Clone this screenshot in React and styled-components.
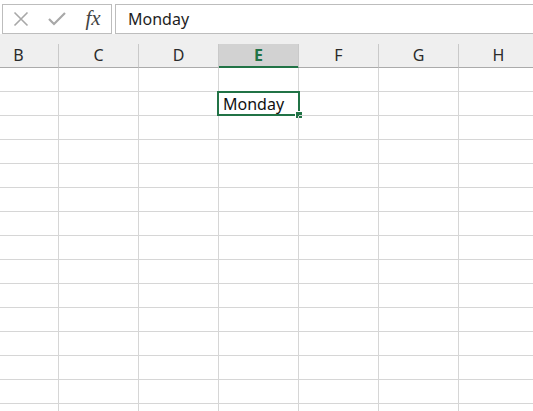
import React from "react";
import styled, { createGlobalStyle } from "styled-components";

const GREEN = "#217346";
const FONT = `"Noto Sans", "Open Sans", "Liberation Sans", sans-serif`;

const Global = createGlobalStyle`
  html, body { margin: 0; padding: 0; background: #ffffff; overflow: hidden; }
  * { box-sizing: border-box; }
`;

const Page = styled.div`
  width: 533px;
  height: 411px;
  overflow: hidden;
  display: flex;
  flex-direction: column;
  font-family: ${FONT};
  background: #ffffff;
`;

const FormulaBar = styled.div`
  display: flex;
  gap: 3px;
  padding: 4px 0 0 2px;
  height: 34px;
  background: #ffffff;
  margin-right: -20px;
`;

const ActionBox = styled.div`
  width: 110px;
  height: 30px;
  border: 1px solid #bdbdbd;
  background: #ffffff;
  display: flex;
  align-items: center;
`;

const IconSlot = styled.div`
  width: 36px;
  height: 28px;
  display: flex;
  align-items: center;
  justify-content: center;
`;

const Fx = styled.span`
  font-family: "Liberation Serif", "DejaVu Serif", serif;
  font-style: italic;
  font-size: 21px;
  color: #444444;
  line-height: 1;
  margin-top: -2px;
`;

const FormulaInput = styled.div`
  flex: 1;
  height: 30px;
  border: 1px solid #bdbdbd;
  background: #ffffff;
  padding: 1px 0 0 12px;
  font-size: 16px;
  line-height: 27px;
  color: #1e1e1e;
`;

const HeaderStrip = styled.div`
  background: #efefef;
  padding-top: 10px;
  display: flex;
  margin-left: -21px;
`;

const ColHeader = styled.div`
  flex: 0 0 80px;
  height: 24px;
  border-right: 1px solid #c9c9c9;
  border-bottom: 1px solid #ababab;
  text-align: center;
  font-size: 16px;
  line-height: 23px;
  color: ${(p) => (p.$active ? GREEN : "#2b2b2b")};
  font-weight: ${(p) => (p.$active ? 700 : 400)};
  background: ${(p) => (p.$active ? "#d2d2d2" : "transparent")};
  ${(p) =>
    p.$active &&
    `border-bottom-color: ${GREEN}; box-shadow: inset 0 -1px 0 ${GREEN};`}
`;

const Grid = styled.div`
  display: flex;
  flex-direction: column;
  margin-left: -21px;
`;

const Row = styled.div`
  display: flex;
  flex: 0 0 auto;
  height: 24px;
`;

const Cell = styled.div`
  position: relative;
  flex: 0 0 80px;
  border-right: 1px solid #d6d6d6;
  border-bottom: 1px solid #d6d6d6;
  padding: 1px 0 0 4px;
  font-size: 16px;
  line-height: 22px;
  color: #111111;
  white-space: nowrap;
`;

const Selection = styled.div`
  position: absolute;
  left: -2px;
  top: -1px;
  right: -2px;
  bottom: -1px;
  border: 2px solid ${GREEN};
  pointer-events: none;
`;

const FillHandle = styled.div`
  position: absolute;
  left: 77px;
  top: 19px;
  width: 6px;
  height: 6px;
  background: ${GREEN};
  box-shadow: 0 0 0 1px #ffffff;
`;

const COLS = ["B", "C", "D", "E", "F", "G", "H"];
const ROWS = 15;

export default function App() {
  return (
    <Page>
      <Global />
      <FormulaBar>
        <ActionBox>
          <IconSlot>
            <svg width="16" height="16" viewBox="0 0 16 16">
              <path d="M1.5 1.5 L14.5 14.5 M14.5 1.5 L1.5 14.5" stroke="#a8a8a8" strokeWidth="1.6" fill="none" />
            </svg>
          </IconSlot>
          <IconSlot>
            <svg width="18" height="14" viewBox="0 0 18 14">
              <path d="M1 7 L6 12 L17 1" stroke="#a8a8a8" strokeWidth="2.2" fill="none" />
            </svg>
          </IconSlot>
          <IconSlot>
            <Fx>fx</Fx>
          </IconSlot>
        </ActionBox>
        <FormulaInput>Monday</FormulaInput>
      </FormulaBar>
      <HeaderStrip>
        {COLS.map((c) => (
          <ColHeader key={c} $active={c === "E"}>
            {c}
          </ColHeader>
        ))}
      </HeaderStrip>
      <Grid>
        {Array.from({ length: ROWS }).map((_, r) => (
          <Row key={r}>
            {COLS.map((c) => {
              const selected = r === 1 && c === "E";
              return (
                <Cell key={c}>
                  {selected && "Monday"}
                  {selected && (
                    <Selection>
                      <FillHandle />
                    </Selection>
                  )}
                </Cell>
              );
            })}
          </Row>
        ))}
      </Grid>
    </Page>
  );
}
